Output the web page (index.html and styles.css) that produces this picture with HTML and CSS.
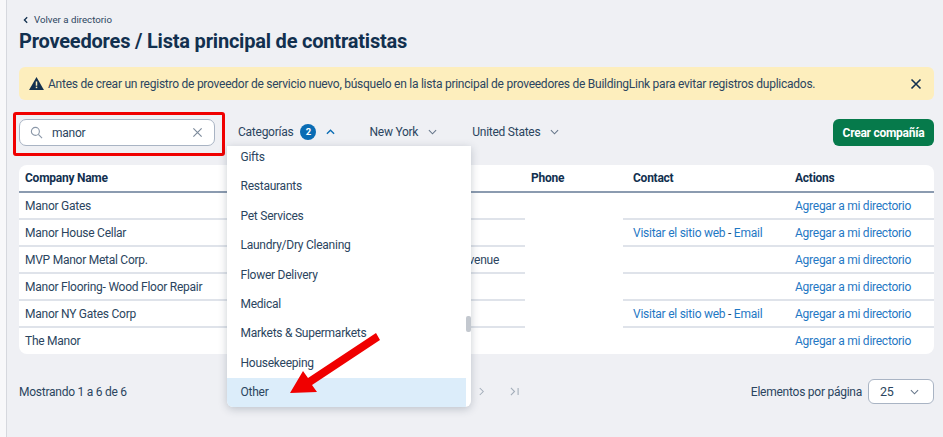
FILE: index.html
```html
<!DOCTYPE html>
<html lang="en">
<head>
    <meta charset="UTF-8">
    <meta name="viewport" content="width=device-width, initial-scale=1.0">
    <title>Proveedores</title>
    <link rel="stylesheet" href="styles.css">
</head>
<body>
    <div class="page">
        <div class="edge"></div>
        <div class="container">
            <a class="back-link">
                <svg class="back-icon" viewBox="0 0 8 8"><path d="M5.2 1.2 2.4 4l2.8 2.8" /></svg>
                Volver a directorio
            </a>
            <h1>Proveedores / Lista principal de contratistas</h1>

            <div class="alert">
                <svg class="alert-icon" viewBox="0 0 16 14"><path d="M8 0 16 14H0Z" /><rect x="7.2" y="4.8" width="1.6" height="4.6" fill="#fdeebd" /><rect x="7.2" y="10.4" width="1.6" height="1.6" fill="#fdeebd" /></svg>
                <span class="alert-text">Antes de crear un registro de proveedor de servicio nuevo, búsquelo en la lista principal de proveedores de BuildingLink para evitar registros duplicados.</span>
                <svg class="alert-close" viewBox="0 0 12 12"><path d="M1.5 1.5l9 9M10.5 1.5l-9 9" /></svg>
            </div>

            <div class="toolbar">
                <div class="search">
                    <svg class="search-icon" viewBox="0 0 14 14"><circle cx="5.8" cy="5.8" r="4.3" /><path d="M9 9l4 4" /></svg>
                    <span class="search-value">manor</span>
                    <svg class="search-clear" viewBox="0 0 12 12"><path d="M1.5 1.5l9 9M10.5 1.5l-9 9" /></svg>
                </div>
                <div class="filter filter-categories">
                    Categorías
                    <span class="badge">2</span>
                    <svg class="chevron chevron-open" viewBox="0 0 10 6"><path d="M1 5l4-4 4 4" /></svg>
                </div>
                <div class="filter filter-state">
                    New York
                    <svg class="chevron" viewBox="0 0 10 6"><path d="M1 1l4 4 4-4" /></svg>
                </div>
                <div class="filter">
                    United States
                    <svg class="chevron" viewBox="0 0 10 6"><path d="M1 1l4 4 4-4" /></svg>
                </div>
                <button class="create-button">Crear compañía</button>
            </div>

            <div class="table-card">
                <table>
                    <colgroup>
                        <col class="col-name">
                        <col class="col-address">
                        <col class="col-phone">
                        <col class="col-contact">
                        <col class="col-actions">
                    </colgroup>
                    <thead>
                        <tr>
                            <th>Company Name</th>
                            <th></th>
                            <th>Phone</th>
                            <th class="contact-cell">Contact</th>
                            <th class="actions-cell">Actions</th>
                        </tr>
                    </thead>
                    <tbody>
                        <tr>
                            <td>Manor Gates</td>
                            <td></td>
                            <td class="phone-cell" rowspan="6"></td>
                            <td class="contact-cell"></td>
                            <td class="actions-cell"><a>Agregar a mi directorio</a></td>
                        </tr>
                        <tr>
                            <td>Manor House Cellar</td>
                            <td></td>
                            <td class="contact-cell"><a>Visitar el sitio web</a> - <a>Email</a></td>
                            <td class="actions-cell"><a>Agregar a mi directorio</a></td>
                        </tr>
                        <tr>
                            <td>MVP Manor Metal Corp.</td>
                            <td class="address-cell">Avenue</td>
                            <td class="contact-cell"></td>
                            <td class="actions-cell"><a>Agregar a mi directorio</a></td>
                        </tr>
                        <tr>
                            <td>Manor Flooring- Wood Floor Repair</td>
                            <td></td>
                            <td class="contact-cell"></td>
                            <td class="actions-cell"><a>Agregar a mi directorio</a></td>
                        </tr>
                        <tr>
                            <td>Manor NY Gates Corp</td>
                            <td></td>
                            <td class="contact-cell"><a>Visitar el sitio web</a> - <a>Email</a></td>
                            <td class="actions-cell"><a>Agregar a mi directorio</a></td>
                        </tr>
                        <tr>
                            <td>The Manor</td>
                            <td></td>
                            <td class="contact-cell"></td>
                            <td class="actions-cell"><a>Agregar a mi directorio</a></td>
                        </tr>
                    </tbody>
                </table>
            </div>

            <div class="pagination">
                <span>Mostrando 1 a 6 de 6</span>
                <div class="pager">
                    <svg class="pager-icon" viewBox="0 0 8 10"><path d="M2 1l4 4-4 4" /></svg>
                    <svg class="pager-icon pager-last" viewBox="0 0 12 10"><path d="M2 1l4 4-4 4M10 1v8" /></svg>
                </div>
                <div class="per-page">
                    <span>Elementos por página</span>
                    <div class="per-page-select">
                        25
                        <svg class="chevron" viewBox="0 0 10 6"><path d="M1 1l4 4 4-4" /></svg>
                    </div>
                </div>
            </div>
        </div>
    </div>

    <div class="search-highlight"></div>

    <div class="dropdown">
        <ul class="dropdown-list">
            <li>Gifts</li>
            <li>Restaurants</li>
            <li>Pet Services</li>
            <li>Laundry/Dry Cleaning</li>
            <li>Flower Delivery</li>
            <li>Medical</li>
            <li>Markets &amp; Supermarkets</li>
            <li>Housekeeping</li>
            <li class="active">Other</li>
        </ul>
        <div class="dropdown-thumb"></div>
    </div>

    <svg class="arrow" viewBox="0 0 943 437"><polygon points="290,393 303,371 308,378 376,333 380,340 312,385 317,392" /></svg>
</body>
</html>
```

FILE: styles.css
```css
:root {
    --navy: #12304f;
    --text: #2b4560;
    --blue: #1f78c4;
    --line: #dfe3ea;
    --page: #eff0f4;
}

* {
    box-sizing: border-box;
}

html, body {
    height: 100%;
}

body {
    font-family: Roboto, "Liberation Sans", sans-serif;
    font-size: 12px;
    letter-spacing: -0.25px;
    margin: 0;
    background-color: var(--page);
    color: var(--text);
    overflow: hidden;
}

.page {
    display: flex;
    height: 437px;
}

.edge {
    width: 7px;
    flex: none;
    background-color: #f8f8fa;
    border-right: 1px solid #d6d8de;
}

.container {
    width: 927px;
    padding: 13px 0 0 12px;
}

.back-link {
    display: flex;
    align-items: center;
    gap: 4px;
    height: 13px;
    padding-left: 3px;
    font-size: 9.7px;
    letter-spacing: 0;
    color: var(--text);
}

.back-icon {
    width: 8px;
    height: 8px;
    fill: none;
    stroke: var(--navy);
    stroke-width: 1.3;
}

h1 {
    margin: 1px 0 0;
    height: 28px;
    line-height: 28px;
    font-size: 20px;
    font-weight: 700;
    letter-spacing: -0.2px;
    color: var(--navy);
}

.alert {
    display: flex;
    align-items: center;
    height: 33px;
    margin-top: 12px;
    padding: 0 12px 0 10px;
    background-color: #fdeebd;
    border-radius: 6px;
}

.alert-icon {
    width: 15px;
    height: 13px;
    fill: var(--navy);
    flex: none;
}

.alert-text {
    margin-left: 4px;
    flex: 1;
    white-space: nowrap;
}

.alert-close {
    width: 12px;
    height: 12px;
    fill: none;
    stroke: var(--navy);
    stroke-width: 1.6;
    flex: none;
}

.toolbar {
    display: flex;
    align-items: center;
    height: 27px;
    margin-top: 19px;
}

.search {
    display: flex;
    align-items: center;
    width: 196px;
    height: 27px;
    padding: 0 11px 0 10px;
    background-color: #fff;
    border: 1px solid #a9b4c4;
    border-radius: 7px;
}

.search-icon {
    width: 13px;
    height: 13px;
    fill: none;
    stroke: #8a97a8;
    stroke-width: 1.2;
    flex: none;
}

.search-value {
    margin-left: 9px;
    flex: 1;
}

.search-clear {
    width: 11px;
    height: 11px;
    fill: none;
    stroke: #7d8b9c;
    stroke-width: 1.3;
    flex: none;
}

.filter {
    display: flex;
    align-items: center;
    gap: 7px;
    padding-bottom: 2px;
    color: var(--text);
    white-space: nowrap;
}

.filter-categories {
    margin-left: 23px;
}

.filter-state {
    margin-left: 34px;
    margin-right: 35px;
}

.badge {
    display: flex;
    align-items: center;
    justify-content: center;
    width: 16px;
    height: 16px;
    border-radius: 50%;
    background-color: #0a6cb4;
    color: #fff;
    font-size: 9.5px;
    font-weight: 700;
}

.chevron {
    width: 9px;
    height: 6px;
    margin-left: 3px;
    fill: none;
    stroke: #66768a;
    stroke-width: 1.2;
}

.chevron-open {
    stroke: #0a6cb4;
    stroke-width: 1.5;
}

.create-button {
    margin-left: auto;
    height: 27px;
    width: 101px;
    padding: 0;
    background-color: #067a4b;
    color: #fff;
    border: none;
    border-radius: 6px;
    font-family: inherit;
    font-size: 12px;
    font-weight: 700;
    letter-spacing: -0.25px;
}

.table-card {
    margin-top: 19px;
    background-color: #fff;
    border-radius: 8px;
    overflow: hidden;
}

table {
    width: 915px;
    border-collapse: collapse;
    table-layout: fixed;
}

.col-name { width: 208px; }
.col-address { width: 298px; }
.col-phone { width: 98px; }
.col-contact { width: 161px; }
.col-actions { width: 150px; }

th {
    height: 27px;
    padding: 0 0 0 6px;
    text-align: left;
    font-weight: 700;
    color: var(--navy);
    border-bottom: 2px solid #8b9bb0;
}

td {
    height: 27px;
    padding: 0 0 0 6px;
    border-bottom: 2px solid var(--line);
    white-space: nowrap;
}

tbody tr:last-child td {
    border-bottom: none;
}

.contact-cell {
    padding-left: 10px;
}

.actions-cell {
    padding-left: 11px;
}

.phone-cell {
    border-bottom: none;
}

.address-cell {
    text-align: right;
    padding-right: 26px;
}

td a {
    color: var(--blue);
}

.pagination {
    display: flex;
    align-items: center;
    height: 25px;
    margin-top: 25px;
}

.pager {
    display: flex;
    align-items: center;
    gap: 24px;
    margin-left: 351px;
}

.pager-icon {
    width: 7px;
    height: 9px;
    fill: none;
    stroke: #a3adb9;
    stroke-width: 1.2;
}

.pager-last {
    width: 11px;
}

.per-page {
    display: flex;
    align-items: center;
    gap: 6px;
    margin-left: auto;
}

.per-page-select {
    display: flex;
    align-items: center;
    justify-content: space-between;
    width: 66px;
    height: 25px;
    padding: 0 14px 0 11px;
    background-color: #fff;
    border: 1px solid #a9b4c4;
    border-radius: 6px;
    font-size: 12.5px;
}

.search-highlight {
    position: absolute;
    left: 13px;
    top: 112px;
    width: 212px;
    height: 44px;
    border: 3px solid #f00000;
    border-radius: 3px;
}

.dropdown {
    position: absolute;
    left: 227px;
    top: 146px;
    width: 244px;
    height: 261px;
    background-color: #fff;
    border-radius: 0 0 6px 6px;
    box-shadow: 0 2px 8px rgba(40, 55, 75, 0.25);
    overflow: hidden;
}

.dropdown-list {
    list-style: none;
    margin: -3px 5px 0 0;
    padding: 0;
}

.dropdown-list li {
    height: 29.4px;
    line-height: 29.4px;
    padding-left: 13.5px;
}

.dropdown-list li.active {
    height: 30px;
    background-color: #dcedfa;
}

.dropdown-thumb {
    position: absolute;
    right: 0;
    top: 170px;
    width: 5px;
    height: 16px;
    border-radius: 2px;
    background-color: #c3c8cf;
}

.arrow {
    position: absolute;
    left: 0;
    top: 0;
    width: 943px;
    height: 437px;
    fill: #f00000;
    pointer-events: none;
}
```
